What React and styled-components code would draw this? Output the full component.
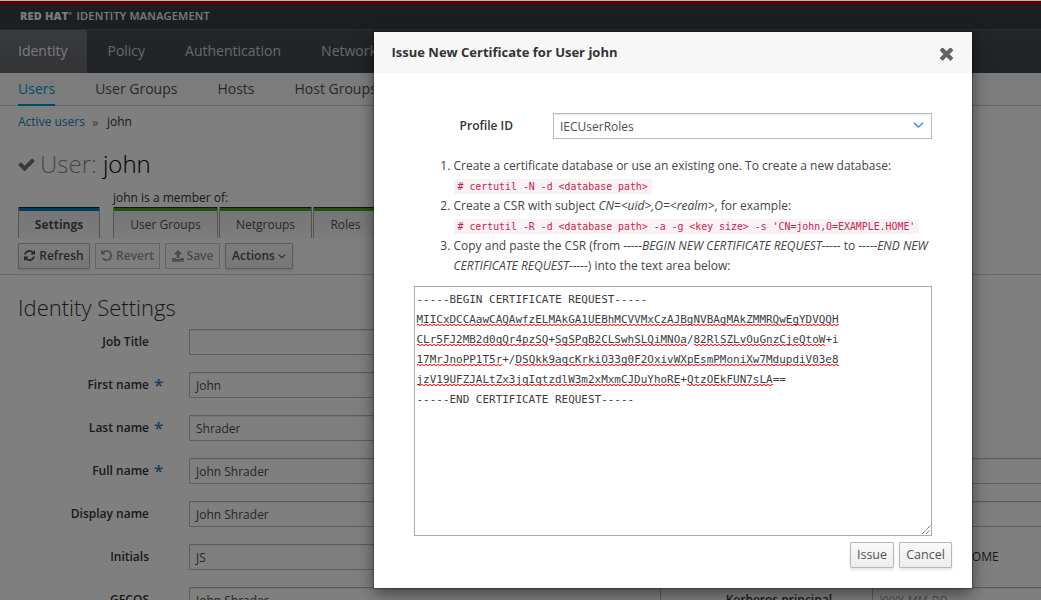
import React from "react";
import styled, { createGlobalStyle, css } from "styled-components";

const Global = createGlobalStyle`
  * { box-sizing: border-box; }
  html, body { margin: 0; padding: 0; }
  body {
    font: 12px/20px "Open Sans", "Liberation Sans", sans-serif;
    color: #333;
    overflow: hidden;
  }
  button, input, textarea { font: inherit; }
`;

const Page = styled.div`
  display: flex;
  flex-direction: column;
  height: 600px;
  width: 1041px;
  overflow: hidden;
  background: #fff;
`;
const WindowEdge = styled.div`
  flex: none;
  height: 1px;
  background: #b6b6b8;
`;
const Viewport = styled.div`
  position: relative;
  flex: 1;
  overflow: hidden;
`;
const Masthead = styled.header`
  height: 28px;
  border-top: 3px solid #cc0000;
  background: #393f44;
  color: #f4f4f4;
  padding: 2px 20px 0;
  font: 600 11px/20px "Open Sans", sans-serif;
  white-space: nowrap;
  display: flex;
`;
const BrandStrong = styled.span`
  font-weight: 800;
  width: 56.5px;
  letter-spacing: 0.15px;
  sup { font-size: 4px; line-height: 0; vertical-align: 5px; }
`;
const BrandName = styled.span`
  letter-spacing: 0.19px;
`;
const PrimaryNav = styled.nav`
  display: flex;
  height: 44px;
  border-top: 1px solid #53565b;
  background: linear-gradient(#474c50, #3f474b);
`;
const PrimaryItem = styled.a`
  padding: 0 ${(p) => p.$end ?? 20}px 0 ${(p) => p.$start ?? 18}px;
  font-size: 14px;
  line-height: 42px;
  color: ${(p) => (p.$active ? "#f4f4f4" : "#d1d1d1")};
  ${(p) => p.$active && css`background: linear-gradient(#72757a, #65686d);`}
`;
const SubNav = styled.nav`
  display: flex;
  gap: 40px;
  height: 33px;
  padding: 0 18px;
  background: #f9f9f9;
  border-bottom: 1px solid #cecdcd;
`;
const SubItem = styled.a`
  height: 33px;
  font-size: 14px;
  line-height: 31px;
  color: ${(p) => (p.$active ? "#0099d3" : "#4d5258")};
  border-bottom: 2px solid ${(p) => (p.$active ? "#0099d3" : "transparent")};
  white-space: nowrap;
`;
const Crumbs = styled.div`
  display: flex;
  gap: 7px;
  height: 30px;
  padding: 5.5px 18px 0;
`;
const CrumbLink = styled.a`color: #1a80b8;`;
const Chevrons = styled.span`
  color: #777;
  font-size: 13px;
  margin-right: 1.5px;
`;
const Title = styled.h1`
  display: flex;
  align-items: center;
  height: 50px;
  margin: 0;
  padding: 6px 18px 0;
  font-size: 24px;
  font-weight: 300;
  line-height: 40px;
  color: #000;
  white-space: pre;
  svg { margin: 0 5px 0 0; color: #707070; }
  span { color: #8c8c8c; }
`;
const TabsRow = styled.div`
  display: flex;
  align-items: flex-end;
  height: 52px;
  padding-left: 18px;
`;
const TabGroup = styled.div`
  margin-left: ${(p) => p.$left ?? 0}px;
`;
const GroupCaption = styled.div`
  line-height: 22px;
  height: 20px;
`;
const Tabs = styled.div`display: flex; gap: 1px;`;
const Tab = styled.div`
  width: ${(p) => p.$w}px;
  height: 31px;
  border: solid #aaa49d;
  border-width: 0 1px;
  background: linear-gradient(${(p) => (p.$blue ? "#002a45" : "#0a3c08")} 1px, ${(p) => (p.$blue ? "#007ac2" : "#46a324")} 1px 4px, #ececec 4px, #f9f9f9);
  color: #4d5258;
  font-size: 12px;
  font-weight: ${(p) => (p.$blue ? 700 : 400)};
  line-height: 36px;
  text-align: center;
`;
const Toolbar = styled.div`
  display: flex;
  gap: 5px;
  height: 37px;
  padding: 5px 18px 0;
  border-bottom: 1px solid #cfcfcf;
`;
const Button = styled.button`
  display: flex;
  align-items: center;
  justify-content: center;
  gap: ${(p) => p.$gap ?? 4}px;
  width: ${(p) => p.$w}px;
  height: 26px;
  padding: 0 0 1px;
  border: 1px solid #b7b7b7;
  border-radius: 1px;
  background: linear-gradient(#fafafa, #ededed);
  box-shadow: 0 2px 3px rgba(3, 3, 3, 0.1);
  color: #4d5258;
  font-weight: 600;
  line-height: 20px;
  ${(p) => p.$disabled && css`
    background: #fafafa;
    box-shadow: none;
    color: #969696;
    border-color: #c8c8c8;
  `}
`;
const Form = styled.section`display: flex;`;
const Column = styled.div`
  width: 683px;
  flex: none;
`;
const Heading = styled.h2`
  height: 54px;
  margin: 0;
  padding: 12px 18px 0;
  font-size: 22px;
  font-weight: 300;
  line-height: 40px;
`;
const Field = styled.div`
  display: flex;
  height: 43px;
`;
const Label = styled.label`
  width: ${(p) => p.$w ?? 149}px;
  text-align: right;
  font-weight: 600;
  line-height: 26px;
`;
const Star = styled.span`
  width: 40px;
  padding-left: 5px;
  color: #2d78c0;
  font-size: 17px;
  font-weight: 600;
  line-height: 25px;
`;
const Input = styled.div`
  width: 472px;
  height: 26px;
  padding: 2px 6px;
  border: 1px solid #bababa;
  border-radius: 1px;
  box-shadow: inset 0 1px 1px rgba(3, 3, 3, 0.075);
  line-height: 22px;
  color: ${(p) => (p.$hint ? "#999" : "#4d4d4d")};
  font-style: ${(p) => (p.$hint ? "italic" : "normal")};
`;
const Static = styled.div`line-height: 26px;`;

const Backdrop = styled.div`
  position: absolute;
  inset: 0;
  background: rgba(0, 0, 0, 0.5);
`;
const Dialog = styled.div`
  position: absolute;
  left: 374px;
  top: 31px;
  width: 598px;
  height: 556px;
  background: #fff;
  box-shadow: 0 0 1px 1px rgba(0, 0, 0, 0.2), 0 5px 15px rgba(0, 0, 0, 0.5);
`;
const DialogHeader = styled.header`
  display: flex;
  justify-content: space-between;
  align-items: flex-start;
  height: 41px;
  padding: 10px 19px 0 17.5px;
  background: #f7f7f7;
  h4 { margin: 0; font-size: 13px; line-height: 20px; font-weight: 700; color: #333; }
  svg { color: #636363; margin-top: 6px; }
`;
const DialogBody = styled.div`padding: 40px 40px 0;`;
const ProfileRow = styled.div`
  display: flex;
  gap: 40px;
`;
const Select = styled.div`
  display: flex;
  justify-content: space-between;
  width: 379px;
  height: 26px;
  padding: 2px 7px 0 6px;
  border: 1px solid #bababa;
  box-shadow: inset 0 1px 1px rgba(3, 3, 3, 0.075);
  line-height: 21px;
  color: #4d4d4d;
  svg { color: #2a9bd6; margin-top: 3px; }
`;
const Steps = styled.ol`
  margin: 17px 0 10px;
  padding: 0 0 0 39.5px;
  width: 520px;
  white-space: nowrap;
  color: #444;
`;
const Code = styled.code`
  padding: 2px 4px;
  background: #f9f2f4;
  color: #c7254e;
  font: 9.9px/18px "DejaVu Sans Mono", monospace;
`;
const CsrBox = styled.div`
  position: relative;
  width: 518px;
  height: 250px;
  padding: 3px 2px 2px 1.5px;
  border: 1px solid #a9a9a9;
  font: 10.96px/20px "DejaVu Sans Mono", monospace;
  color: #3c3c3c;
  white-space: pre;
`;
const Misspelt = styled.span`
  background-image:
    linear-gradient(90deg, #f33 50%, #fcc 50%),
    linear-gradient(90deg, #fcc 50%, #f33 50%);
  background-size: 4px 1px;
  background-repeat: repeat-x;
  background-position: 0 calc(100% - 1px), 0 100%;
`;
const Grip = styled.svg`
  position: absolute;
  right: 1px;
  bottom: 1px;
`;
const DialogFooter = styled.footer`
  display: flex;
  justify-content: flex-end;
  gap: 5px;
  padding: 6px 20px 0;
  button { font-weight: 400; font-size: 12.5px; }
`;

const paths = {
  check: "M1671 566q0 40-28 68l-724 724-136 136q-28 28-68 28t-68-28l-136-136-362-362q-28-28-28-68t28-68l136-136q28-28 68-28t68 28l294 295 656-657q28-28 68-28t68 28l136 136q28 28 28 68z",
  refresh: "M1511 928q0 5-1 7-64 268-268 434.5t-478 166.5q-146 0-282.5-55t-243.5-157l-129 129q-19 19-45 19t-45-19-19-45v-448q0-26 19-45t45-19h448q26 0 45 19t19 45-19 45l-137 137q71 66 161 102t187 36q134 0 250-65t186-179q11-17 53-117 8-23 30-23h192q13 0 22.5 9.5t9.5 22.5zm25-800v448q0 26-19 45t-45 19h-448q-26 0-45-19t-19-45 19-45l138-138q-148-137-349-137-134 0-250 65t-186 179q-11 17-53 117-8 23-30 23h-199q-13 0-22.5-9.5t-9.5-22.5v-7q65-268 270-434.5t480-166.5q146 0 284 55.5t245 156.5l130-129q19-19 45-19t45 19 19 45z",
  undo: "M1664 896q0 156-61 298t-164 245-245 164-298 61q-172 0-327-72.5t-264-204.5q-7-10-6.5-22.5t8.5-20.5l137-138q10-9 25-9 16 2 23 12 73 95 179 147t225 52q104 0 198.5-40.5t163.5-109.5 109.5-163.5 40.5-198.5-40.5-198.5-109.5-163.5-163.5-109.5-198.5-40.5q-98 0-188 35.5t-160 101.5l137 138q31 30 14 69-17 40-59 40h-448q-26 0-45-19t-19-45v-448q0-42 40-59 39-17 69 14l130 129q107-101 244.5-156.5t284.5-55.5q156 0 298 61t245 164 164 245 61 298z",
  upload: "M1344 1472q0-26-19-45t-45-19-45 19-19 45 19 45 45 19 45-19 19-45zm256 0q0-26-19-45t-45-19-45 19-19 45 19 45 45 19 45-19 19-45zm128-224v320q0 40-28 68t-68 28h-1472q-40 0-68-28t-28-68v-320q0-40 28-68t68-28h427q21 56 70.5 92t110.5 36h256q61 0 110.5-36t70.5-92h427q40 0 68 28t28 68zm-325-648q-17 40-59 40h-256v448q0 26-19 45t-45 19h-256q-26 0-45-19t-19-45v-448h-256q-42 0-59-40-17-39 14-69l448-448q18-19 45-19t45 19l448 448q31 30 14 69z",
  close: "M1490 1322q0 40-28 68l-136 136q-28 28-68 28t-68-28l-294-294-294 294q-28 28-68 28t-68-28l-136-136q-28-28-28-68t28-68l294-294-294-294q-28-28-28-68t28-68l136-136q28-28 68-28t68 28l294 294 294-294q28-28 68-28t68 28l136 136q28 28 28 68t-28 68l-294 294 294 294q28 28 28 68z",
};
const Icon = ({ name, box, size = 12, width = size }) => (
  <svg width={width} height={size} viewBox={box} fill="currentColor">
    <path d={paths[name]} />
  </svg>
);
const Angle = ({ w = 8 }) => (
  <svg width={w} height={w} viewBox="0 0 10 10" fill="none" stroke="currentColor" strokeWidth="1.3">
    <path d="M.8 3.4 5 7.2 9.2 3.4" />
  </svg>
);

const fields = [
  ["Job Title", "", false],
  ["First name", "John", true],
  ["Last name", "Shrader", true],
  ["Full name", "John Shrader", true],
  ["Display name", "John Shrader", false],
  ["Initials", "JS", false],
  ["GECOS", "John Shrader", false],
];

const csr = [
  [["MIICxDCCAawCAQAwfzELMAkGA1UEBhMCVVMxCzAJBgNVBAgMAkZMMRQwEgYDVQQH", 1]],
  [["CLr5FJ2MB2d0qQr4pzSQ", 1], ["+"], ["SgSPqB2CLSwhSLQiMNOa", 1], ["/"], ["82RlSZLvOuGnzCjeQtoW", 1], ["+i"]],
  [["17MrJnoPP1T5r", 1], ["+/"], ["DSQkk9aqcKrkiO33g0F2OxivWXpEsmPMoniXw7MdupdiV03e8", 1]],
  [["jzV19UFZJALtZx3jqIqtzdlW3m2xMxmCJDuYhoRE", 1], ["+"], ["QtzOEkFUN7sLA", 1], ["=="]],
];

export default function App() {
  return (
    <Page>
      <Global />
      <WindowEdge />
      <Viewport>
        <Masthead>
          <BrandStrong>RED HAT<sup>®</sup></BrandStrong>
          <BrandName>IDENTITY MANAGEMENT</BrandName>
        </Masthead>
        <PrimaryNav>
          <PrimaryItem $active $end={20}>Identity</PrimaryItem>
          <PrimaryItem $start={20}>Policy</PrimaryItem>
          <PrimaryItem $start={20}>Authentication</PrimaryItem>
          <PrimaryItem $start={20}>Network Services</PrimaryItem>
        </PrimaryNav>
        <SubNav>
          <SubItem $active>Users</SubItem>
          <SubItem>User Groups</SubItem>
          <SubItem>Hosts</SubItem>
          <SubItem>Host Groups</SubItem>
        </SubNav>
        <Crumbs>
          <CrumbLink>Active users</CrumbLink>
          <Chevrons>»</Chevrons>
          <span>john</span>
        </Crumbs>
        <Title>
          <Icon name="check" box="121 270 1550 1252" size={13} width={17} />
          <span>User: </span>john
        </Title>
        <TabsRow>
          <TabGroup>
            <Tab $w={82} $blue>Settings</Tab>
          </TabGroup>
          <TabGroup $left={13}>
            <GroupCaption>john is a member of:</GroupCaption>
            <Tabs>
              <Tab $w={105}>User Groups</Tab>
              <Tab $w={93}>Netgroups</Tab>
              <Tab $w={65}>Roles</Tab>
            </Tabs>
          </TabGroup>
        </TabsRow>
        <Toolbar>
          <Button $w={72}><Icon name="refresh" box="0 0 1536 1536" size={11} />Refresh</Button>
          <Button $w={65} $disabled><Icon name="undo" box="128 128 1536 1536" size={11} />Revert</Button>
          <Button $w={55} $disabled $gap={3}><Icon name="upload" box="64 64 1664 1600" size={12} />Save</Button>
          <Button $w={68} $gap={3}>Actions<Angle /></Button>
        </Toolbar>
        <Form>
          <Column>
            <Heading>Identity Settings</Heading>
            {fields.map(([label, value, required]) => (
              <Field key={label}>
                <Label>{label}</Label>
                <Star>{required ? "*" : ""}</Star>
                <Input>{value}</Input>
              </Field>
            ))}
          </Column>
          <Column>
            <Heading />
            <Field />
            <Field />
            <Field />
            <Field><Label /><Star /><Input /></Field>
            <Field><Label /><Star /><Input /></Field>
            <Field><Label /><Star /><Static>john@EXAMPLE.HOME</Static></Field>
            <Field><Label>Kerberos principal</Label><Star /><Input $hint>YYYY-MM-DD</Input></Field>
          </Column>
        </Form>
        <Backdrop />
        <Dialog>
          <DialogHeader>
            <h4>Issue New Certificate for User john</h4>
            <Icon name="close" box="302 434 1188 1120" size={13} />
          </DialogHeader>
          <DialogBody>
            <ProfileRow>
              <Label $w={99}>Profile ID</Label>
              <Select>IECUserRoles<Angle w={11} /></Select>
            </ProfileRow>
            <Steps>
              <li>Create a certificate database or use an existing one. To create a new database:<br />
                <Code># certutil -N -d &lt;database path&gt;</Code></li>
              <li>Create a CSR with subject <i>CN=&lt;uid&gt;,O=&lt;realm&gt;</i>, for example:<br />
                <Code># certutil -R -d &lt;database path&gt; -a -g &lt;key size&gt; -s 'CN=john,O=EXAMPLE.HOME'</Code></li>
              <li>Copy and paste the CSR (from <i>-----BEGIN NEW CERTIFICATE REQUEST-----</i> to <i>-----END NEW<br />
                CERTIFICATE REQUEST-----</i>) into the text area below:</li>
            </Steps>
            <CsrBox>
              <div>-----BEGIN CERTIFICATE REQUEST-----</div>
              {csr.map((line, i) => (
                <div key={i}>
                  {line.map(([text, bad], j) => (bad ? <Misspelt key={j}>{text}</Misspelt> : <span key={j}>{text}</span>))}
                </div>
              ))}
              <div>-----END CERTIFICATE REQUEST-----</div>
              <Grip width="8" height="8" viewBox="0 0 8 8" stroke="#555" strokeWidth="1" strokeDasharray="1.2 .5">
                <path d="M0 8 8 0M4 8 8 4" />
              </Grip>
            </CsrBox>
          </DialogBody>
          <DialogFooter>
            <Button $w={44}>Issue</Button>
            <Button $w={53}>Cancel</Button>
          </DialogFooter>
        </Dialog>
      </Viewport>
    </Page>
  );
}
